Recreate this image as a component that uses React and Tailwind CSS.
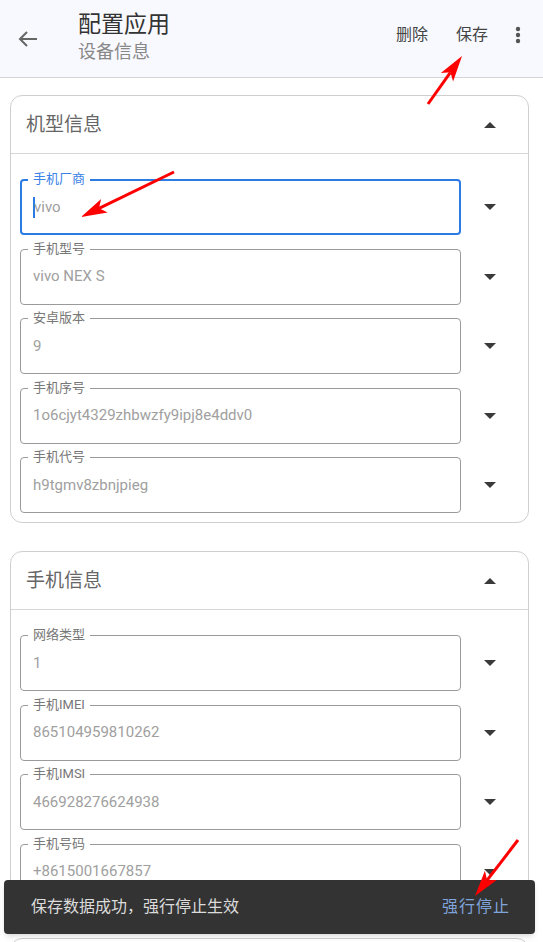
import React from "react";

const FONT = { fontFamily: 'Roboto, "Noto Sans CJK SC", sans-serif' };

function Caret({ up }) {
  return (
    <svg width="14" height="8" viewBox="0 0 14 8" className="block">
      {up ? (
        <polygon points="1,7 7,1 13,7" fill="#3a3a3a" />
      ) : (
        <polygon points="1,1 7,7 13,1" fill="#3a3a3a" />
      )}
    </svg>
  );
}

function Field({ label, value, focused }) {
  return (
    <div className="flex items-center">
      <div
        className={
          focused
            ? "relative flex-1 h-[56px] rounded-[4px] border-2 border-[#2a7be4] flex items-center pl-[11px]"
            : "relative flex-1 h-[56px] rounded-[4px] border border-[#9a9a9a] flex items-center pl-[12px]"
        }
      >
        <span
          className={
            focused
              ? "absolute left-[6px] top-[-10px] bg-white px-[5px] text-[13px] leading-[16px] text-[#3b82e6]"
              : "absolute left-[7px] top-[-9px] bg-white px-[5px] text-[13px] leading-[16px] text-[#777]"
          }
        >
          {label}
        </span>
        {focused && <span className="w-[2px] h-[21px] bg-[#2a7be4] mr-[-1px]" />}
        <span className="text-[15px] text-[#a0a0a0]">{value}</span>
      </div>
      <div className="w-[58px] flex justify-center">
        <Caret />
      </div>
    </div>
  );
}

function Card({ title, fields }) {
  return (
    <div className="border border-[#cfcfcf] rounded-[12px] bg-white">
      <div className="h-[58px] flex items-center border-b border-[#d6d6d6] pl-[15px] pr-[9px]">
        <span className="flex-1 text-[19px] text-[#666] mt-[2px]">{title}</span>
        <div className="w-[58px] flex justify-center">
          <Caret up />
        </div>
      </div>
      <div className="pt-[25px] pb-[9px] pl-[9px] pr-[9px] flex flex-col gap-[13.5px]">
        {fields.map((f) => (
          <Field key={f.label} {...f} />
        ))}
      </div>
    </div>
  );
}

function Arrow({ x1, y1, x2, y2 }) {
  const dx = x2 - x1;
  const dy = y2 - y1;
  const len = Math.sqrt(dx * dx + dy * dy);
  const ux = dx / len;
  const uy = dy / len;
  const hl = 26;
  const hw = 7.5;
  const bx = x2 - ux * hl;
  const by = y2 - uy * hl;
  const px = -uy;
  const py = ux;
  const pts = `${x2},${y2} ${bx + px * hw},${by + py * hw} ${bx + ux * 6},${by + uy * 6} ${bx - px * hw},${by - py * hw}`;
  return (
    <g>
      <line x1={x1} y1={y1} x2={bx + ux * 6} y2={by + uy * 6} stroke="#ff0000" strokeWidth="3" />
      <polygon points={pts} fill="#ff0000" />
    </g>
  );
}

export default function App() {
  const card1 = [
    { label: "手机厂商", value: "vivo", focused: true },
    { label: "手机型号", value: "vivo NEX S" },
    { label: "安卓版本", value: "9" },
    { label: "手机序号", value: "1o6cjyt4329zhbwzfy9ipj8e4ddv0" },
    { label: "手机代号", value: "h9tgmv8zbnjpieg" },
  ];
  const card2 = [
    { label: "网络类型", value: "1" },
    { label: "手机IMEI", value: "865104959810262" },
    { label: "手机IMSI", value: "466928276624938" },
    { label: "手机号码", value: "+8615001667857" },
  ];
  return (
    <div className="relative w-[543px] h-[942px] overflow-hidden bg-white" style={FONT}>
      <header className="h-[78px] bg-[#f8f9fe] border-b border-[#d4d4d4] flex items-center">
        <div className="w-[78px] flex items-center pl-[17px]">
          <svg width="22" height="18" viewBox="0 0 22 18">
            <path d="M20 9 H3 M10 2 L3 9 L10 16" stroke="#666" strokeWidth="2" fill="none" />
          </svg>
        </div>
        <div className="flex-1 flex flex-col mt-[-2px]">
          <span className="text-[23px] leading-[28px] text-[#333]">配置应用</span>
          <span className="text-[18px] leading-[24px] text-[#888] mt-[1px]">设备信息</span>
        </div>
        <div className="flex items-center text-[16px] text-[#444] mb-[8px]">
          <span className="mr-[28px]">删除</span>
          <span className="mr-[27px]">保存</span>
          <svg width="6" height="18" viewBox="0 0 6 18" className="mr-[22px]">
            <circle cx="3" cy="3" r="2.2" fill="#555" />
            <circle cx="3" cy="9" r="2.2" fill="#555" />
            <circle cx="3" cy="15" r="2.2" fill="#555" />
          </svg>
        </div>
      </header>
      <main className="pl-[10px] pr-[14px] pt-[17px] flex flex-col gap-[28px]">
        <Card title="机型信息" fields={card1} />
        <Card title="手机信息" fields={card2} />
        <div className="h-[60px] border border-[#cfcfcf] rounded-[12px] bg-white" />
      </main>
      <div className="absolute left-[4px] top-[880px] w-[531px] h-[54px] bg-[#333333] rounded-[4px] shadow-md flex items-center pl-[27px] pr-[25px]">
        <span className="flex-1 text-[16px] text-[#dcdcdc]">保存数据成功，强行停止生效</span>
        <span className="text-[16px] tracking-[1px] text-[#7fa5dc]">强行停止</span>
      </div>
      <svg className="absolute left-0 top-0 pointer-events-none" width="543" height="942">
        <Arrow x1={428} y1={104} x2={462} y2={56} />
        <Arrow x1={174} y1={172} x2={81} y2={217} />
        <Arrow x1={518} y1={840} x2={475} y2={896} />
      </svg>
    </div>
  );
}
